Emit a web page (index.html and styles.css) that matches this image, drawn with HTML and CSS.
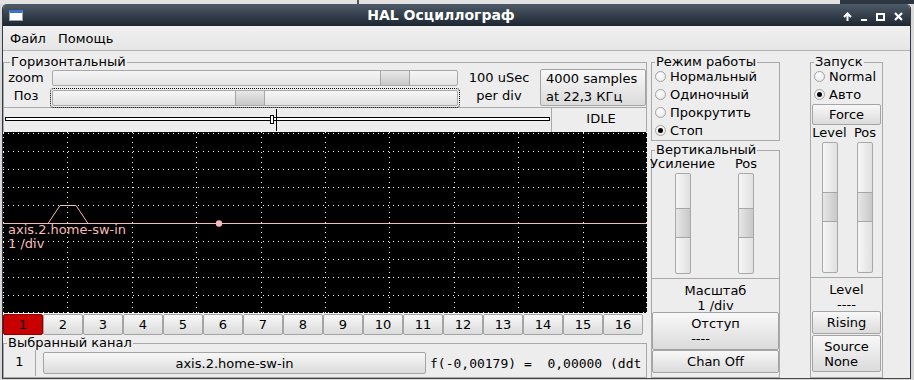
FILE: index.html
```html
<!DOCTYPE html>
<html lang="ru">
<head>
  <meta charset="UTF-8">
  <title>HAL Осциллограф</title>
  <link rel="stylesheet" href="styles.css">
</head>
<body>
<div class="desk">
  <div class="behind"><span class="bh-a"></span><span class="bh-line"></span><span class="bh-b"></span><span class="bh-dark"></span></div>
  <div class="win">
    <!-- заголовок окна -->
    <div class="titlebar">
      <div class="tb-left"><span class="appicon"></span></div>
      <div class="tb-title">HAL Осциллограф</div>
      <div class="tb-btns">
        <svg width="71" height="22" viewBox="0 0 71 22">
          <g stroke="#fff" stroke-width="2" fill="none">
            <path d="M8.5 17 V10 M5 13 L8.5 9.5 L12 13"/>
            <path d="M22 16 H28"/>
            <rect x="38" y="10" width="7" height="6"/>
            <path d="M56 9 L63 16 M63 9 L56 16" stroke-width="2.2"/>
          </g>
        </svg>
      </div>
    </div>
    <div class="menubar"><span>Файл</span><span>Помощь</span></div>

    <div class="main">
      <div class="col-left">
        <fieldset class="grp hz">
          <legend>Горизонтальный</legend>
          <div class="hz-grid">
            <span class="lbl">zoom</span>
            <div class="hslider"><span class="thumb" style="left:327px"></span></div>
            <span class="rate">100 uSec</span>
            <button class="btn samples"><span class="lines">4000 samples<br>at 22,3 КГц</span></button>
            <span class="lbl">Поз</span>
            <div class="hslider focus"><span class="thumb" style="left:182px"></span></div>
            <span class="rate">per div</span>
          </div>
        </fieldset>

        <div class="trig">
          <svg width="547" height="23" viewBox="0 0 547 23">
            <rect x="1.5" y="9.5" width="544" height="3" fill="#fff" stroke="#000"/>
            <rect x="266.5" y="7.5" width="3" height="8" fill="#fff" stroke="#000"/>
            <path d="M272.5 1 V23" stroke="#000"/>
          </svg>
          <div class="idle">IDLE</div>
        </div>

        <svg class="scope" width="644" height="181" viewBox="0 0 644 181">
          <rect width="644" height="181" fill="#000"/>
          <g stroke="#fff" stroke-dasharray="1 4" shape-rendering="crispEdges">
            <path d="M0.5 0 V181 M64.5 0 V181 M129.5 0 V181 M193.5 0 V181 M258.5 0 V181 M322.5 0 V181 M386.5 0 V181 M451.5 0 V181 M515.5 0 V181 M580.5 0 V181 M643.5 0 V181"/>
            <path d="M0 1.5 H644 M0 19.5 H644 M0 37.5 H644 M0 55.5 H644 M0 73.5 H644 M0 109.5 H644 M0 127.5 H644 M0 145.5 H644 M0 163.5 H644 M0 180.5 H644"/>
          </g>
          <g stroke="#f4bcb8" fill="none">
            <path d="M0 91.5 H644" shape-rendering="crispEdges"/>
            <polyline points="45,91.5 57,73.5 73,73.5 85,91.5"/>
          </g>
          <circle cx="216" cy="91.5" r="3.2" fill="#f4bcb8"/>
          <text x="5" y="102" class="trace-txt">axis.2.home-sw-in</text>
          <text x="5" y="116" class="trace-txt">1 /div</text>
        </svg>

        <div class="chans">
          <button class="btn ch sel">1</button>
          <button class="btn ch">2</button>
          <button class="btn ch">3</button>
          <button class="btn ch">4</button>
          <button class="btn ch">5</button>
          <button class="btn ch">6</button>
          <button class="btn ch">7</button>
          <button class="btn ch">8</button>
          <button class="btn ch">9</button>
          <button class="btn ch">10</button>
          <button class="btn ch">11</button>
          <button class="btn ch">12</button>
          <button class="btn ch">13</button>
          <button class="btn ch">14</button>
          <button class="btn ch">15</button>
          <button class="btn ch">16</button>
        </div>

        <fieldset class="grp selch">
          <legend>Выбранный канал</legend>
          <div class="sel-row">
            <span class="chnum">1</span>
            <button class="btn signame">axis.2.home-sw-in</button>
            <span class="readout">f(-0,00179) =  0,00000 (ddt</span>
          </div>
        </fieldset>
      </div>

      <div class="col-mid">
        <fieldset class="grp mode">
          <legend>Режим работы</legend>
          <div class="radios">
            <label class="radio"><span class="dot"></span>Нормальный</label>
            <label class="radio"><span class="dot"></span>Одиночный</label>
            <label class="radio"><span class="dot"></span>Прокрутить</label>
            <label class="radio"><span class="dot on"></span>Стоп</label>
          </div>
        </fieldset>

        <fieldset class="grp vert">
          <legend>Вертикальный</legend>
          <div class="vgrid">
            <span>Усиление</span>
            <span>Pos</span>
            <div class="vslider"><span class="vthumb" style="top:34px"></span></div>
            <div class="vslider"><span class="vthumb" style="top:34px"></span></div>
          </div>
          <div class="info">Масштаб<br>1 /div</div>
          <button class="btn tall"><span class="lines">Отступ<br>----</span></button>
          <button class="btn short">Chan Off</button>
        </fieldset>
      </div>

      <div class="col-right">
        <fieldset class="grp run">
          <legend>Запуск</legend>
          <div class="radios">
            <label class="radio"><span class="dot"></span>Normal</label>
            <label class="radio"><span class="dot on"></span>Авто</label>
          </div>
          <button class="btn force">Force</button>
          <div class="tgrid">
            <span>Level</span>
            <span>Pos</span>
            <div class="vslider long"><span class="vthumb" style="top:49px"></span></div>
            <div class="vslider long"><span class="vthumb" style="top:49px"></span></div>
          </div>
          <div class="info">Level<br>----</div>
          <button class="btn rising">Rising</button>
          <button class="btn source"><span class="lines">Source<br>None</span></button>
        </fieldset>
      </div>
    </div>
  </div>
</div>
</body>
</html>
```

FILE: styles.css
```css
* {
  box-sizing: border-box;
}
body {
  margin: 0;
  font-family: "DejaVu Sans", sans-serif;
  font-size: 13px;
  color: #000;
  background: #d9d9d9;
}
.desk {
  width: 914px;
  height: 380px;
  overflow: hidden;
  background: #d9d9d9;
}
.behind {
  display: flex;
  height: 4px;
}
.bh-a {
  width: 357px;
  background: #e2e2e2;
}
.bh-line {
  width: 2px;
  background: #555;
}
.bh-b {
  width: 481px;
  background: #e2e2e2;
}
.bh-dark {
  flex: 1;
  background: #2c3640;
}

/* окно */
.win {
  margin-left: 2px;
  width: 909px;
  height: 375px;
  background: #ededed;
  border-left: 1px solid #303840;
  border-right: 1px solid #303840;
  border-bottom: 1px solid #444;
  border-radius: 5px 5px 0 0;
  overflow: hidden;
}
.titlebar {
  display: flex;
  height: 22px;
  background: linear-gradient(#4e5a67, #1c2732);
  color: #fff;
}
.tb-left {
  width: 40px;
  padding: 6px 0 0 6px;
}
.appicon {
  display: block;
  width: 14px;
  height: 11px;
  background: #fff;
  border: 1px solid #9aa4b0;
  border-top: 3px solid #3f6fc8;
}
.tb-title {
  flex: 1;
  text-align: center;
  font-weight: bold;
  font-size: 14px;
  line-height: 22px;
}
.tb-btns {
  width: 71px;
}
.tb-btns svg {
  display: block;
}
.menubar {
  display: flex;
  gap: 12px;
  height: 25px;
  padding: 5px 0 0 7px;
  background: linear-gradient(#f0f0f0, #e6e6e6);
  border-bottom: 1px solid #b4b4b4;
}

.main {
  display: flex;
  padding-top: 4px;
}
.col-left {
  width: 644px;
  display: flex;
  flex-direction: column;
}
.col-mid {
  width: 129px;
  margin-left: 4px;
  display: flex;
  flex-direction: column;
  gap: 2px;
}
.col-right {
  width: 73px;
  margin-left: 30px;
}

/* групповые рамки */
.grp {
  margin: 0;
  padding: 0;
  min-width: 0;
  border: 1px solid #a9a9a9;
}
.grp legend {
  padding: 0 1px;
  margin-left: 3px;
  line-height: 14px;
}

.btn {
  font-family: inherit;
  font-size: 13px;
  color: #000;
  margin: 0;
  padding: 0;
  background: linear-gradient(#f8f8f8, #dbdbdb);
  border: 1px solid #a4a4a4;
  border-radius: 2px;
}
.lines {
  display: inline-block;
  text-align: left;
  line-height: 15px;
}

/* горизонтальный */
.hz {
  height: 53px;
  padding: 0 0 0 3px;
}
.hz-grid {
  display: grid;
  grid-template-columns: 45px 406px 82px 106px;
  grid-template-rows: 18px 19px;
}
.lbl {
  text-align: center;
  line-height: 18px;
  padding-right: 7px;
}
.rate {
  text-align: center;
  line-height: 18px;
}
.samples {
  grid-column: 4;
  grid-row: 1 / span 2;
  text-align: left;
  padding-left: 5px;
}
.samples .lines {
  line-height: 18px;
}
.hslider {
  position: relative;
  height: 16px;
  margin-top: 1px;
  border: 1px solid #a8a8a8;
  border-radius: 2px;
  background: linear-gradient(#f6f6f6, #e2e2e2);
}
.hslider.focus {
  margin-top: 3px;
  outline: 1px dotted #000;
  outline-offset: 1px;
}
.thumb {
  position: absolute;
  top: 0;
  bottom: 0;
  width: 30px;
  background: linear-gradient(#e8e8e8, #c8c8c8);
  border-left: 1px solid #a6a6a6;
  border-right: 1px solid #a6a6a6;
}

.trig {
  display: flex;
  height: 24px;
  border-left: 1px solid #a9a9a9;
  border-right: 1px solid #a9a9a9;
}
.trig svg {
  display: block;
}
.idle {
  flex: 1;
  border-left: 1px solid #a9a9a9;
  padding-left: 4px;
  text-align: center;
  line-height: 22px;
}

.scope {
  display: block;
}
.trace-txt {
  fill: #f4bcb8;
  font-family: "DejaVu Sans", sans-serif;
  font-size: 13px;
}

.chans {
  display: grid;
  grid-template-columns: repeat(16, 40px);
  height: 21px;
  margin-top: 1px;
}
.ch {
  height: 21px;
}
.ch.sel {
  background: #c80000;
  border-color: #8c0000;
}

.selch {
  height: 42px;
  margin-top: 1px;
}
.sel-row {
  display: flex;
  align-items: center;
  height: 26px;
  white-space: nowrap;
  overflow: hidden;
}
.chnum {
  width: 32px;
  height: 100%;
  border-right: 1px solid #a9a9a9;
  text-align: center;
  line-height: 24px;
}
.signame {
  width: 383px;
  height: 22px;
  margin-left: 7px;
}
.readout {
  margin-left: 4px;
  font-family: "DejaVu Sans Mono", monospace;
  white-space: pre;
}

/* радиокнопки */
.radios {
  display: flex;
  flex-direction: column;
  margin-top: -2px;
}
.radio {
  display: flex;
  align-items: center;
  height: 18px;
  padding-left: 3px;
}
.dot {
  width: 11px;
  height: 11px;
  margin-right: 4px;
  border: 1px solid #a2a2a2;
  border-radius: 50%;
  background: radial-gradient(circle at 40% 35%, #fff, #e4e4e4);
  display: flex;
  align-items: center;
  justify-content: center;
}
.dot.on::after {
  content: "";
  width: 5px;
  height: 5px;
  border-radius: 50%;
  background: #000;
}

.mode {
  height: 86px;
}
.vert {
  height: 235px;
  display: flex;
  flex-direction: column;
}
.vgrid {
  display: grid;
  grid-template-columns: 61px 66px;
  justify-items: center;
  row-gap: 2px;
}
.vgrid span {
  line-height: 14px;
}
.vslider {
  position: relative;
  width: 16px;
  height: 101px;
  border: 1px solid #a8a8a8;
  border-radius: 2px;
  background: linear-gradient(90deg, #f6f6f6, #e0e0e0);
}
.vslider.long {
  height: 131px;
}
.vthumb {
  position: absolute;
  left: 0;
  right: 0;
  height: 30px;
  background: linear-gradient(90deg, #e6e6e6, #c8c8c8);
  border-top: 1px solid #a6a6a6;
  border-bottom: 1px solid #a6a6a6;
}
.info {
  margin-top: 4px;
  border-top: 1px solid #a9a9a9;
  padding-top: 4px;
  text-align: center;
  line-height: 15px;
  height: 34px;
}
.tall {
  height: 38px;
}
.short {
  height: 23px;
}

.run {
  height: 323px;
  display: flex;
  flex-direction: column;
}
.force {
  height: 21px;
  margin: 1px 1px 0;
}
.tgrid {
  display: grid;
  grid-template-columns: 37px 34px;
  justify-items: center;
  row-gap: 2px;
  margin-top: 1px;
}
.tgrid span {
  line-height: 14px;
}
.rising {
  height: 23px;
  margin: 0 1px;
}
.source {
  height: 37px;
  margin: 1px 1px 0;
}
```
